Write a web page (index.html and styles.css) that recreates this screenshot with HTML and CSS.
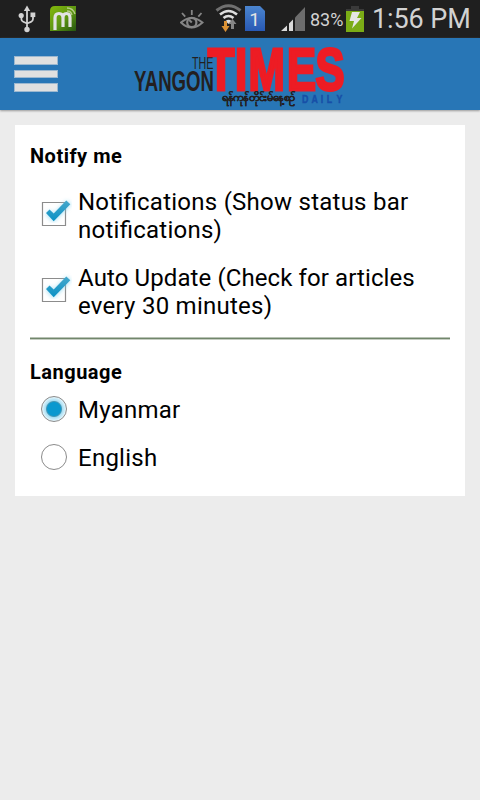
FILE: index.html
```html
<!DOCTYPE html>
<html lang="en">
<head>
  <meta charset="UTF-8" />
  <title>The Yangon Times Daily - Settings</title>
  <meta name="viewport" content="width=device-width, initial-scale=1.0"/>
  <link rel="stylesheet" href="styles.css">
</head>
<body>
  <div class="status-bar">
    <svg class="usb" width="18" height="28" viewBox="0 0 18 28" fill="none" stroke="#d2d2d2" stroke-width="1.8">
      <path d="M9 5v19M3.4 11v3.2q0 2 2 2.6L9 18.5M15 10v4q0 2-2 2.8L9 18.5"/>
      <path d="M9 .5l3.2 5.5H5.8z" fill="#d2d2d2" stroke="none"/>
      <circle cx="3.2" cy="10.5" r="2.6" fill="#d2d2d2" stroke="none"/>
      <path d="M12.5 7.5h4.8v4.6h-4.8z" fill="#d2d2d2" stroke="none"/>
      <circle cx="9" cy="24.5" r="2.7" fill="#d2d2d2" stroke="none"/>
    </svg>
    <svg class="messenger" width="26" height="25" viewBox="0 0 26 25">
      <defs>
        <linearGradient id="green" x1="0" y1="0" x2="1" y2="1">
          <stop offset="0" stop-color="#84b90c"/>
          <stop offset=".55" stop-color="#5c9412"/>
          <stop offset="1" stop-color="#245410"/>
        </linearGradient>
      </defs>
      <path d="M5 0h21v25H0V5q0-5 5-5z" fill="url(#green)"/>
      <path d="M5 24V12q0-4.5 4-4.5t4 4.5v9M13 12q0-4.500 3.500-4.500t3.500 4.500v9" fill="none" stroke="#e2e2e2" stroke-width="3.2"/>
      <path d="M17 5q4 0 5 4M17 2q6 0 8 6" fill="none" stroke="#b8cc8a" stroke-width="1.3"/>
    </svg>
    <span class="spacer"></span>
    <svg class="eye" width="24" height="20" viewBox="0 0 24 20" fill="none" stroke="#858585">
      <path d="M1 12.5q10.5-9 21.5 0q-11 10-21.5 0z" stroke-width="2"/>
      <circle cx="11.8" cy="12.5" r="4.6" stroke-width="2.2"/>
      <path d="M11.8 12.5l-2.5-2.5" stroke-width="2"/>
      <path d="M11.8 0v5M2 3l3.2 3.700M21.500 3l-3.200 3.700" stroke-width="1.8"/>
    </svg>
    <svg class="wifi" width="28" height="28" viewBox="0 0 28 28" fill="none">
      <path d="M1.5 6.500q12-9.500 24 0" stroke="#707070" stroke-width="3"/>
      <path d="M5 10.500q8.500-7 17 0M8.500 14q5-4 10 0" stroke="#dedede" stroke-width="2.6"/>
      <path d="M10.500 17q3-2.500 6 0l-3 3z" fill="#dedede"/>
      <path d="M9 17h3v5h2.500l-4 6-4-6H9z" fill="#dc9234"/>
      <path d="M16 25v-5h-2.500l4-5 4 5H19v5z" fill="#858585"/>
    </svg>
    <svg class="sim" width="20" height="25" viewBox="0 0 20 25">
      <defs>
        <linearGradient id="blue" x1="0" y1="0" x2="0" y2="1">
          <stop offset="0" stop-color="#4b85cf"/>
          <stop offset="1" stop-color="#2859b4"/>
        </linearGradient>
      </defs>
      <path d="M0 0h15l5 5v20H0z" fill="url(#blue)"/>
      <text x="9.5" y="19.5" text-anchor="middle" font-size="19" fill="#e4e4e4">1</text>
    </svg>
    <svg class="signal" width="25" height="24" viewBox="0 0 25 24">
      <path d="M0 24l6-5.500V24zM8 24v-7.500l4-4V24z" fill="#dadada"/>
      <path d="M14 24V10.500L24 0v24z" fill="#6d6d6d"/>
    </svg>
    <span class="percent">83%</span>
    <svg class="battery" width="18" height="26" viewBox="0 0 18 26">
      <path d="M5 0h8v3h5v3H0V3h5z" fill="#3a3a3a"/>
      <path d="M0 5h18v21H0z" fill="#7bac16"/>
      <path d="M6 6h8l-3 6h4.500L6 22.500 8 15H3.500z" fill="#e6e6e6"/>
    </svg>
    <span class="clock">1:56 PM</span>
  </div>

  <div class="header">
    <div class="menu">
      <span></span>
      <span></span>
      <span></span>
    </div>
    <svg class="logo" width="220" height="72" viewBox="0 0 220 72">
      <text class="the" x="62" y="31" textLength="21.5" lengthAdjust="spacingAndGlyphs">THE</text>
      <text class="yangon" x="4" y="53" textLength="80" lengthAdjust="spacingAndGlyphs">YANGON</text>
      <text class="times" transform="translate(0 51.5) scale(1 1.38)" x="77.8 105 118.5 157 185.5" y="0">TIMES</text>
      <text class="burmese" x="92" y="63" textLength="73" lengthAdjust="spacingAndGlyphs">ရန်ကုန်တိုင်းမ်နေ့စဉ်</text>
      <text class="daily" transform="translate(172 64.5) scale(.8 1)" x="0 12 23.5 31 43" y="0">DAILY</text>
    </svg>
  </div>

  <div class="card">
    <h2>Notify me</h2>
    <div class="option">
      <svg class="check" width="36" height="36" viewBox="0 0 36 36">
        <use href="#checkbox"/>
      </svg>
      <span class="label">Notifications (Show status bar<br>notifications)</span>
    </div>
    <div class="option">
      <svg class="check" width="36" height="36" viewBox="0 0 36 36">
        <defs>
          <filter id="glow" x="-30%" y="-30%" width="160%" height="160%">
            <feGaussianBlur stdDeviation="2"/>
          </filter>
          <linearGradient id="tick" x1="0" y1="0" x2="0" y2="1">
            <stop offset="0" stop-color="#45a8cc"/>
            <stop offset="1" stop-color="#0a91c5"/>
          </linearGradient>
          <g id="checkbox">
            <path d="M6.5 8.5h23v23h-23z" fill="#fff" stroke="#8c8c8c" stroke-width="1.2"/>
            <path d="M12 18l5.500 6L33 8.500" fill="none" stroke="#7cd0ef" stroke-width="6" opacity=".65" filter="url(#glow)"/>
            <path d="M10 19l3.500-3.500 4.200 4L30.300 6.500l4 3.700-16.600 17z" fill="url(#tick)"/>
          </g>
        </defs>
        <use href="#checkbox"/>
      </svg>
      <span class="label"><span class="tight">Auto Update (Check for articles</span><br>every 30 minutes)</span>
    </div>
    <div class="divider"></div>
    <h2>Language</h2>
    <div class="choice">
      <span class="radio selected"></span>
      <span class="label">Myanmar</span>
    </div>
    <div class="choice">
      <span class="radio"></span>
      <span class="label">English</span>
    </div>
  </div>
</body>
</html>
```

FILE: styles.css
```css
body {
  font-family: Roboto, sans-serif;
  margin: 0;
  background: #ececec;
  color: #000;
}

svg {
  display: block;
  flex-shrink: 0;
}

.status-bar {
  display: flex;
  align-items: flex-start;
  height: 38px;
  background: #1f1f1f;
  color: #d2d2d2;
}

.usb {
  margin: 5px 0 0 18px;
}

.messenger {
  margin: 6px 0 0 14px;
}

.spacer {
  flex: 1;
}

.eye {
  margin: 10px 11px 0 0;
}

.wifi {
  margin: 4px 2px 0 0;
}

.sim {
  margin: 6px 16px 0 0;
}

.signal {
  margin: 7px 4px 0 0;
}

.percent {
  width: 36px;
  font-size: 18px;
  line-height: 40px;
}

.battery {
  margin-top: 6px;
}

.clock {
  width: 116px;
  padding-left: 8px;
  box-sizing: border-box;
  font-size: 27px;
  line-height: 38px;
  letter-spacing: -0.1px;
  white-space: nowrap;
}

.header {
  display: flex;
  height: 72px;
  background: #2876b6;
  box-shadow: 0 1px 2px #999;
}

.menu {
  display: flex;
  flex-direction: column;
  gap: 5px;
  width: 44px;
  padding: 18px 0 0 14px;
}

.menu span {
  height: 6.5px;
  background: #e0e0e0;
  border: 1px solid #9cb8d0;
}

.logo {
  margin-left: 72px;
}

.logo text {
  font-family: "Liberation Sans", sans-serif;
  font-weight: bold;
}

.logo .the {
  font-size: 16px;
  font-weight: normal;
  fill: #231f20;
}

.logo .yangon {
  font-size: 29px;
  fill: #231f20;
}

.logo .times {
  font-size: 43.5px;
  fill: #ed1c24;
  stroke: #ed1c24;
  stroke-width: 2.2px;
}

.logo .burmese {
  font-size: 10px;
  fill: #231f20;
  stroke: #231f20;
  stroke-width: 0.3px;
}

.logo .daily {
  font-size: 11px;
  fill: #174fa7;
  stroke: #174fa7;
  stroke-width: 0.4px;
}

.card {
  background: #fff;
  margin: 15px;
  height: 371px;
  padding: 19px 15px 0;
  box-sizing: border-box;
}

h2 {
  margin: 0;
  font-size: 20px;
  line-height: 24px;
  letter-spacing: 0.5px;
}

.option {
  display: flex;
  align-items: flex-start;
  padding: 20px 0 0 6px;
  height: 56px;
}

.check {
  margin: 6px 6px 0 0;
}

.label {
  font-size: 24px;
  line-height: 28px;
  letter-spacing: 0.25px;
  font-feature-settings: "liga" 1;
  white-space: nowrap;
}

.label .tight {
  letter-spacing: 0.1px;
}

.divider {
  height: 1px;
  background: #71866b;
  border-top: 1px solid #b8c2b5;
  border-bottom: 1px solid #c5cdc2;
  margin: 17px 0 20px;
}

.choice {
  display: flex;
  align-items: center;
  height: 28px;
  padding: 12px 0 8px 10px;
}

.radio {
  width: 24px;
  height: 24px;
  border: 1.5px solid #8b8b8b;
  border-radius: 50%;
  margin: -2px 11px 0 1px;
}

.radio.selected {
  background: radial-gradient(circle, #0a98cf 0 6.5px, #4799b7 7.5px, #a9dff4 8.5px, #e6f6fc 12px);
}
```
